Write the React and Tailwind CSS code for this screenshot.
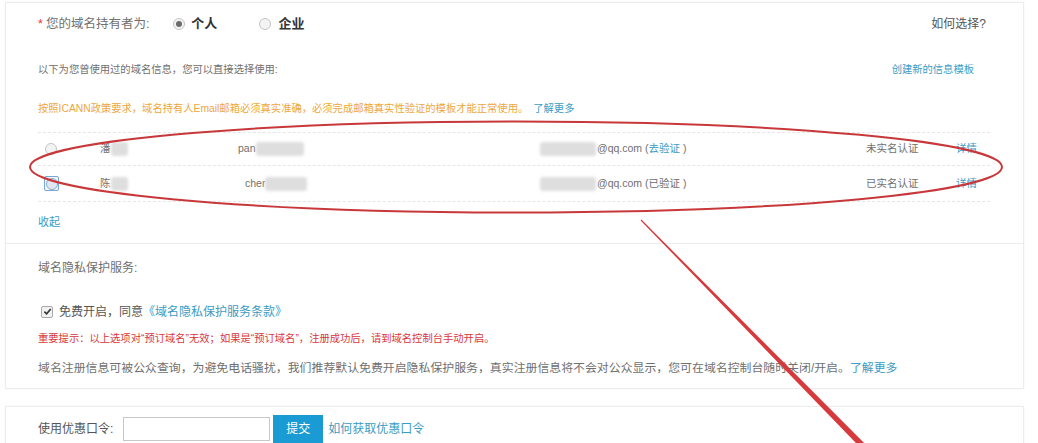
import React from 'react';

const Blur = ({ w }) => (
  <span className="inline-block h-[14px] bg-[#dedede] rounded-[3px] blur-[1.5px] align-middle" style={{ width: w }} />
);

const Radio = ({ checked, tone }) => (
  <span
    className={`inline-flex w-[12px] h-[12px] rounded-full border items-center justify-center shrink-0 ${
      tone === 'blue' ? 'border-[#8fa9c8] bg-[#dfe8f3]' : 'border-[#c4c4c4] bg-[#f3f3f3]'
    }`}
  >
    {checked && <span className="w-[6px] h-[6px] rounded-full bg-[#6a6a6a]" />}
  </span>
);

const Checkbox = () => (
  <span className="inline-flex w-[12px] h-[12px] rounded-[2px] border border-[#a9a9a9] bg-[#f1f1f1] items-center justify-center shrink-0">
    <svg width="9" height="9" viewBox="0 0 10 10">
      <path d="M1.5 5.2 L4 7.6 L8.6 2.2" fill="none" stroke="#333" strokeWidth="1.8" />
    </svg>
  </span>
);

const rows = [
  { name: '潘', user: 'pan', userPad: 'pl-0', status: '未实名认证', verify: '去验证', link: true, focus: false },
  { name: '陈', user: 'cher', userPad: 'pl-[7px]', status: '已实名认证', verify: '已验证', link: false, focus: true },
];

const App = () => {
  return (
    <div className="relative w-[1038px] h-[443px] overflow-hidden bg-white pl-[5px] pt-[2px] font-['Liberation_Sans','Noto_Sans_CJK_SC',sans-serif] text-[#707070]">
      {/* Holder panel */}
      <div className="w-[1019px] border border-[#ececec] shadow-[0_0_2px_rgba(0,0,0,0.05)] bg-white">
        <div className="px-[32px] pt-[8px] pb-[11px]">
          <div className="h-[26px] flex items-center text-[12.5px] leading-[26px]">
            <span className="text-[#e33] mr-[3px]">*</span>
            <span>您的域名持有者为:</span>
            <span className="ml-[24px] flex items-center">
              <Radio checked />
              <span className="ml-[6px] font-bold text-[#333] text-[13px]">个人</span>
            </span>
            <span className="ml-[42px] flex items-center">
              <Radio />
              <span className="ml-[7px] font-bold text-[#333] text-[13px]">企业</span>
            </span>
            <span className="ml-auto mr-[5px] text-[#555] text-[12px]">如何选择?</span>
          </div>

          <div className="mt-[23px] h-[20px] flex items-center text-[10.3px] leading-[20px]">
            <span>以下为您曾使用过的域名信息，您可以直接选择使用:</span>
            <span className="ml-auto mr-[17px] text-[#3b9cc4]">创建新的信息模板</span>
          </div>

          <div className="mt-[19px] h-[20px] flex items-center text-[10.3px] leading-[20px]">
            <span className="text-[#eea73c]">按照ICANN政策要求，域名持有人Email邮箱必须真实准确，必须完成邮箱真实性验证的模板才能正常使用。</span>
            <span className="ml-[5px] text-[#3b9cc4]">了解更多</span>
          </div>

          <div className="mt-[13px] mr-[1px] border-t border-dashed border-[#e6e6e6]">
            {rows.map((r, i) => (
              <div
                key={r.name}
                className={`flex items-center text-[10.5px] border-b border-dashed border-[#e6e6e6] ${i === 0 ? 'h-[33px]' : 'h-[36px]'}`}
              >
                <div className="w-[62px] pl-[7px] flex items-center">
                  {r.focus ? (
                    <span className="inline-flex w-[15px] h-[15px] -ml-[1px] border border-[#7aa6d6] rounded-[2px] items-center justify-center bg-[#f2f6fb]">
                      <Radio tone="blue" />
                    </span>
                  ) : (
                    <Radio />
                  )}
                </div>
                <div className="w-[138px] flex items-center">
                  <span>{r.name}</span>
                  <Blur w="17px" />
                </div>
                <div className={`w-[302px] flex items-center ${r.userPad}`}>
                  <span>{r.user}</span>
                  <Blur w={r.focus ? '42px' : '48px'} />
                </div>
                <div className="w-[326px] flex items-center">
                  <Blur w="56px" />
                  <span className="ml-[1px]">@qq.com ( </span>
                  <span className={r.link ? 'text-[#3b9cc4]' : ''}>{r.verify}</span>
                  <span>&nbsp;)</span>
                </div>
                <div className="w-[90px]">{r.status}</div>
                <div className="text-[#3b9cc4]">详情</div>
              </div>
            ))}
          </div>

          <div className="mt-[10px] h-[20px] flex items-center text-[11px] text-[#3b9cc4]">收起</div>
        </div>

        {/* Privacy section */}
        <div className="border-t border-[#ececec] px-[32px] pt-[14px] pb-[9px]">
          <div className="h-[20px] flex items-center text-[12px]">域名隐私保护服务:</div>
          <div className="mt-[24px] h-[20px] flex items-center text-[12px]">
            <span className="ml-[3px]"><Checkbox /></span>
            <span className="ml-[6px] text-[#555]">免费开启，同意</span>
            <span className="text-[#3b9cc4]">《域名隐私保护服务条款》</span>
          </div>
          <div className="mt-[7px] h-[20px] flex items-center text-[10.3px] text-[#d9373a]">
            重要提示：以上选项对“预订域名”无效；如果是“预订域名”，注册成功后，请到域名控制台手动开启。
          </div>
          <div className="mt-[10px] h-[20px] flex items-center text-[11.9px]">
            <span>域名注册信息可被公众查询，为避免电话骚扰，我们推荐默认免费开启隐私保护服务，真实注册信息将不会对公众显示，您可在域名控制台随时关闭/开启。</span>
            <span className="text-[#3b9cc4]">了解更多</span>
          </div>
        </div>
      </div>

      {/* Coupon panel */}
      <div className="mt-[17px] w-[1019px] h-[60px] border border-[#ececec] shadow-[0_0_2px_rgba(0,0,0,0.05)] bg-white px-[32px] pt-[8px]">
        <div className="h-[28px] flex items-center text-[12px]">
          <span className="text-[#555]">使用优惠口令:</span>
          <input className="ml-[10px] w-[147px] h-[24px] border border-[#c8c8c8] bg-white outline-none" />
          <button className="ml-[3px] w-[50px] h-[28px] bg-[#1a9bd3] text-white text-[12px]">提交</button>
          <span className="ml-[5px] text-[#3b9cc4]">如何获取优惠口令</span>
        </div>
      </div>

      {/* Annotation overlay */}
      <svg className="absolute inset-0 pointer-events-none" width="1038" height="443" viewBox="0 0 1038 443">
        <ellipse cx="516" cy="167" rx="486" ry="45.5" fill="none" stroke="#c8383b" strokeWidth="2" />
        <polygon points="641.4,219.6 871,449.9 866.7,454.1 640.6,220.4" fill="#d63a3c" />
      </svg>
    </div>
  );
};

export default App;
